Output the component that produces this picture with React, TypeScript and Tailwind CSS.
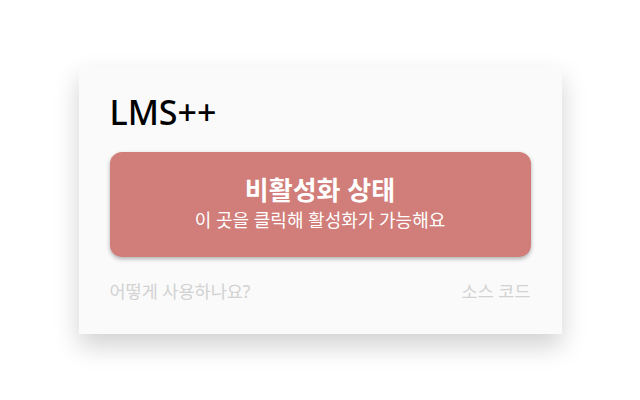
export default function App() {
  return (
    <div
      className="flex h-[400px] w-[640px] items-center justify-center bg-white"
      style={{ fontFamily: '"Noto Sans", "Noto Sans CJK KR", sans-serif' }}
    >
      <div className="flex h-[268px] w-[483px] flex-col bg-[#fafafa] px-[31px] pt-[23px] shadow-[0_12px_24px_rgba(0,0,0,0.18)]">
        <h1 className="text-[34px] font-medium leading-[1.4] text-black">LMS++</h1>
        <button className="mt-[15px] flex h-[105px] w-full flex-col items-center justify-center rounded-[12px] bg-[#d17d79] text-white shadow-[0_2px_4px_rgba(0,0,0,0.3)]">
          <span className="text-[26px] font-semibold leading-[32px]">비활성화 상태</span>
          <span className="text-[18px] leading-[28px]">이 곳을 클릭해 활성화가 가능해요</span>
        </button>
        <div className="mt-[22px] flex justify-between text-[17.5px] leading-[1.4] text-[#d2d2d2]">
          <span>어떻게 사용하나요?</span>
          <span>소스 코드</span>
        </div>
      </div>
    </div>
  );
}
